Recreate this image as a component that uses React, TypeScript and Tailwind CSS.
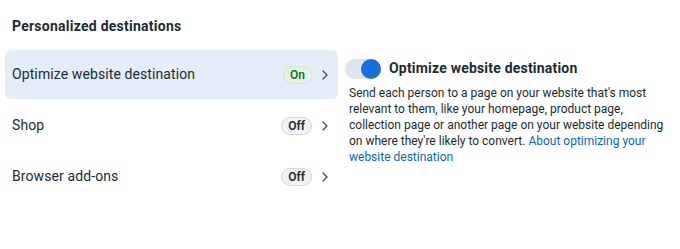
import React from "react";

function Chevron() {
  return (
    <svg width="8" height="12" viewBox="0 0 8 12" fill="none">
      <path d="M2 2l4 4-4 4" stroke="#444950" strokeWidth="1.3" strokeLinecap="round" strokeLinejoin="round" />
    </svg>
  );
}

function Row({ label, on, selected }: { label: string; on: boolean; selected?: boolean }) {
  return (
    <div
      className={`flex h-[49px] items-center justify-between rounded-md pl-[7px] pr-[9px] ${selected ? "bg-[#e4edf8]" : ""}`}
    >
      <span className="text-[14px] tracking-[0.1px] text-[#1c2b33]">{label}</span>
      <div className="flex items-center gap-[9px]">
        {on ? (
          <span className="flex h-[18px] items-center rounded-full border border-[#cfe8d2] bg-[#e3f4e5] px-[6px] text-[12px] font-semibold text-[#1e6b33]">
            On
          </span>
        ) : (
          <span className="flex h-[18px] items-center rounded-full border border-[#d3d8dd] bg-[#f1f3f5] px-[6px] text-[12px] font-semibold text-[#1c2b33]">
            Off
          </span>
        )}
        <Chevron />
      </div>
    </div>
  );
}

export default function App() {
  return (
    <div className="h-[249px] w-[680px] bg-white" style={{ fontFamily: "Roboto, 'Noto Sans', sans-serif" }}>
      <div className="pl-[12px] pt-[16px] text-[14px] font-bold tracking-[0.25px] text-[#1c2b33]">Personalized destinations</div>
      <div className="mt-[13px] flex">
        <div className="ml-[5px] flex w-[333px] flex-col gap-[2px]">
          <Row label="Optimize website destination" on selected />
          <Row label="Shop" on={false} />
          <Row label="Browser add-ons" on={false} />
        </div>
        <div className="ml-[7px] w-[330px] pt-[8px]">
          <div className="flex items-center gap-[8px]">
            <div className="relative h-[20px] w-[36px] rounded-full bg-[#dde5ef]">
              <div className="absolute right-0 top-0 h-[20px] w-[20px] rounded-full bg-[#1a6ed8]" />
            </div>
            <span className="text-[14px] font-bold tracking-[0.2px] text-[#1c2b33]">Optimize website destination</span>
          </div>
          <p className="mt-[6px] pl-[4px] text-[12px] leading-[16px] text-[#1c2b33]">
            Send each person to a page on your website that's most
            <br />
            relevant to them, like your homepage, product page,
            <br />
            collection page or another page on your website depending
            <br />
            on where they're likely to convert.{" "}
            <span className="text-[#0a66c2]">
              About optimizing your
              <br />
              website destination
            </span>
          </p>
        </div>
      </div>
    </div>
  );
}
